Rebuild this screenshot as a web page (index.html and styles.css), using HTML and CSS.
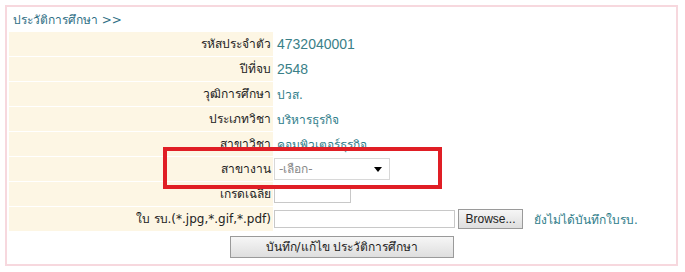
FILE: index.html
```html
<!DOCTYPE html>
<html>
  <head>
    <title>ประวัติการศึกษา</title>
    <link rel="stylesheet" href="styles.css">
  </head>
  <body>
    <div class="box">
      <div class="head"><a href="#">ประวัติการศึกษา &gt;&gt;</a></div>
      <div class="grid">
        <div class="lbl">รหัสประจำตัว</div>
        <div class="val txt big">4732040001</div>
        <div class="lbl">ปีที่จบ</div>
        <div class="val txt big">2548</div>
        <div class="lbl">วุฒิการศึกษา</div>
        <div class="val txt">ปวส.</div>
        <div class="lbl">ประเภทวิชา</div>
        <div class="val txt">บริหารธุรกิจ</div>
        <div class="lbl">สาขาวิชา</div>
        <div class="val txt">คอมพิวเตอร์ธุรกิจ</div>
        <div class="lbl">สาขางาน</div>
        <div class="val">
          <span class="select">-เลือก-<span class="arrow"></span></span>
        </div>
        <div class="lbl">เกรดเฉลี่ย</div>
        <div class="val"><span class="input grade"></span></div>
        <div class="lbl">ใบ รบ.(*.jpg,*.gif,*.pdf)</div>
        <div class="val">
          <span class="input file"></span>
          <span class="btn browse">Browse...</span>
          <span class="note">ยังไม่ได้บันทึกใบรบ.</span>
        </div>
      </div>
      <div class="foot">
        <span class="btn save">บันทึก/แก้ไข ประวัติการศึกษา</span>
      </div>
      <div class="mark"></div>
    </div>
  </body>
</html>
```
FILE: styles.css
```css
body {
  margin: 0;
  padding: 5px 7px 0 5px;
  background: #fff;
  font-family: Tahoma, "DejaVu Sans", sans-serif;
  font-size: 12px;
  color: #333;
}
.box {
  position: relative;
  border: 2px solid #f7d8de;
  height: 261px;
  box-sizing: border-box;
  padding: 1px 2px;
}
.head {
  height: 24px;
  line-height: 24px;
  padding-left: 4px;
}
.head a {
  color: #2f6f86;
  text-decoration: none;
  font-size: 12px;
}
.grid {
  display: grid;
  grid-template-columns: 264px 1fr;
  grid-auto-rows: 24px;
  row-gap: 1px;
}
.lbl {
  background: #fdf6e4;
  text-align: right;
  padding-right: 2px;
  line-height: 24px;
  color: #222;
  font-size: 12px;
}
.val {
  display: flex;
  align-items: center;
  gap: 3px;
  padding-left: 1px;
  color: #2f7d8a;
  font-size: 12px;
}
.val.txt {
  padding-left: 4px;
}
.val.big {
  font-family: Arial, "Liberation Sans", sans-serif;
  font-size: 14px;
  color: #3a7f88;
}
.select {
  position: relative;
  display: inline-block;
  width: 116px;
  height: 22px;
  line-height: 21px;
  border: 1px solid #d8d8d8;
  padding-left: 4px;
  box-sizing: border-box;
  color: #888;
  background: #fff;
}
.arrow {
  position: absolute;
  right: 7px;
  top: 8px;
  border-left: 4px solid transparent;
  border-right: 4px solid transparent;
  border-top: 5px solid #000;
}
.input {
  display: inline-block;
  height: 18px;
  border: 1px solid #c8c8c8;
  box-sizing: border-box;
  background: #fff;
}
.grade {
  width: 77px;
}
.file {
  width: 181px;
}
.btn {
  display: inline-block;
  border: 1px solid #9a9a9a;
  background: linear-gradient(#f6f6f6, #dedede);
  color: #222;
  font-size: 12px;
  box-sizing: border-box;
  text-align: center;
}
.browse {
  width: 65px;
  height: 20px;
  line-height: 18px;
  font-family: Arial, "Liberation Sans", sans-serif;
}
.note {
  margin-left: 8px;
  color: #2f7d8a;
}
.foot {
  padding: 5px 0 0 221px;
}
.save {
  width: 224px;
  height: 22px;
  line-height: 20px;
}
.mark {
  position: absolute;
  left: 156px;
  top: 140px;
  width: 279px;
  height: 42px;
  border: 4px solid #e01e25;
  box-sizing: border-box;
}
```
